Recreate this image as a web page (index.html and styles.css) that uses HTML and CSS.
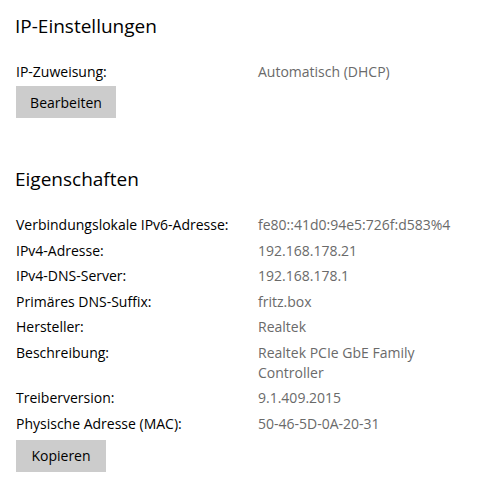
FILE: index.html
```html
<!DOCTYPE html>
<html lang="de">
<head>
<meta charset="utf-8">
<link rel="stylesheet" href="styles.css">
</head>
<body>
<div class="page">
  <section class="section">
    <h2 class="heading">IP-Einstellungen</h2>
    <div class="props">
      <div class="row"><div class="label">IP-Zuweisung:</div><div class="value">Automatisch (DHCP)</div></div>
    </div>
    <button class="btn btn-edit">Bearbeiten</button>
  </section>
  <section class="section section-props">
    <h2 class="heading">Eigenschaften</h2>
    <div class="props">
      <div class="row"><div class="label">Verbindungslokale IPv6-Adresse:</div><div class="value">fe80::41d0:94e5:726f:d583%4</div></div>
      <div class="row"><div class="label">IPv4-Adresse:</div><div class="value">192.168.178.21</div></div>
      <div class="row"><div class="label">IPv4-DNS-Server:</div><div class="value">192.168.178.1</div></div>
      <div class="row"><div class="label">Primäres DNS-Suffix:</div><div class="value">fritz.box</div></div>
      <div class="row"><div class="label">Hersteller:</div><div class="value">Realtek</div></div>
      <div class="row"><div class="label">Beschreibung:</div><div class="value">Realtek PCIe GbE Family Controller</div></div>
      <div class="row"><div class="label">Treiberversion:</div><div class="value">9.1.409.2015</div></div>
      <div class="row"><div class="label">Physische Adresse (MAC):</div><div class="value">50-46-5D-0A-20-31</div></div>
    </div>
    <button class="btn btn-copy">Kopieren</button>
  </section>
</div>
</body>
</html>
```
FILE: styles.css
```css
html, body {
  margin: 0;
  padding: 0;
  background: #fff;
}
body {
  font-family: "Open Sans", "Noto Sans", sans-serif;
  color: #000;
}
.page {
  padding: 12px 16px 0 16px;
  display: flex;
  flex-direction: column;
}
.section {
  display: flex;
  flex-direction: column;
  align-items: flex-start;
}
.section-props {
  margin-top: 47px;
}
.heading {
  margin: 0 0 0 -1px;
  font-size: 19px;
  font-weight: 400;
  line-height: 28px;
}
.props {
  margin-top: 22px;
  display: flex;
  flex-direction: column;
  gap: 5.5px;
  width: 100%;
}
.row {
  display: flex;
  font-size: 14px;
  line-height: 20px;
}
.label {
  width: 242px;
  flex: none;
}
.value {
  color: #6a6a6a;
  width: 205px;
}
.btn {
  border: none;
  background: #cccccc;
  font-family: inherit;
  font-size: 14px;
  color: #000;
  height: 32px;
  padding: 0;
}
.btn-edit {
  margin-top: 4px;
  width: 100px;
}
.btn-copy {
  margin-top: 6px;
  width: 90px;
}
```
